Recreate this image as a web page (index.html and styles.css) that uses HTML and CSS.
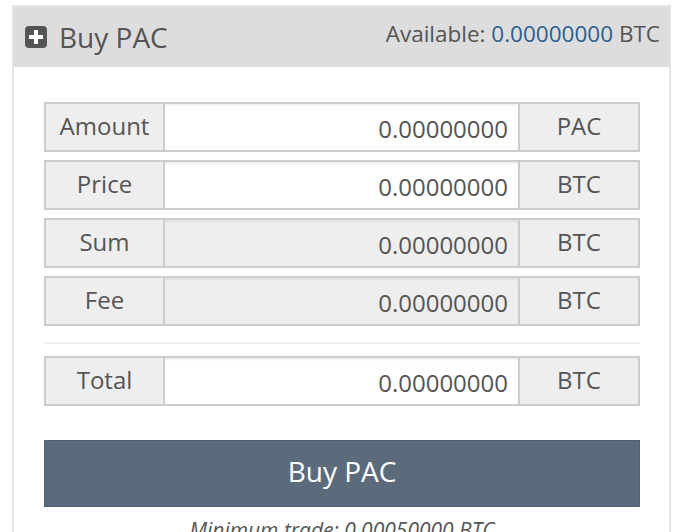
FILE: index.html
```html
<!DOCTYPE html>
<html lang="en">
<head>
    <meta charset="UTF-8">
    <title>Buy PAC</title>
    <link rel="stylesheet" href="styles.css">
</head>
<body>

<!-- buy panel -->
<div class="panel">
    <div class="panel-heading">
        <div class="title">
            <svg class="plus-icon" width="22" height="22" viewBox="0 0 22 22">
                <rect x="0" y="0" width="22" height="22" rx="4" fill="#555"/>
                <rect x="9" y="4" width="4" height="14" fill="#fff"/>
                <rect x="4" y="9" width="14" height="4" fill="#fff"/>
            </svg>
            Buy PAC
        </div>
        <div class="available">Available: <span class="balance">0.00000000</span> BTC</div>
    </div>

    <div class="panel-body">
        <div class="input-row">
            <div class="label">Amount</div>
            <div class="value">0.00000000</div>
            <div class="addon">PAC</div>
        </div>
        <div class="input-row">
            <div class="label">Price</div>
            <div class="value">0.00000000</div>
            <div class="addon">BTC</div>
        </div>
        <div class="input-row">
            <div class="label">Sum</div>
            <div class="value readonly">0.00000000</div>
            <div class="addon">BTC</div>
        </div>
        <div class="input-row">
            <div class="label">Fee</div>
            <div class="value readonly">0.00000000</div>
            <div class="addon">BTC</div>
        </div>

        <div class="divider"></div>

        <div class="input-row">
            <div class="label">Total</div>
            <div class="value">0.00000000</div>
            <div class="addon">BTC</div>
        </div>

        <button class="buy-btn">Buy PAC</button>
        <div class="min-trade">Minimum trade: 0.00050000 BTC</div>
    </div>
</div>

</body>
</html>
```

FILE: styles.css
```css
body {
    font-family: "Open Sans", "Liberation Sans", sans-serif;
    background-color: #ffffff;
    color: #555555;
    margin: 0;
    padding: 5px 0 0 12px;
}
.panel {
    width: 659px;
    height: 540px;
    border: 2px solid #e4e4e4;
    border-bottom: none;
    box-sizing: border-box;
}
.panel-heading {
    background-color: #dddddd;
    height: 60px;
    padding: 0 9px 0 11px;
    display: flex;
    justify-content: space-between;
    align-items: center;
}
.title {
    display: flex;
    align-items: center;
    font-size: 28px;
    color: #555555;
}
.plus-icon {
    margin-right: 12px;
}
.available {
    font-size: 22.5px;
    color: #555555;
    padding-bottom: 8px;
}
.balance {
    color: #2b5f91;
}
.panel-body {
    padding: 35px 29px 0 30px;
}
.input-row {
    display: flex;
    height: 50px;
    margin-bottom: 8px;
    font-size: 24px;
}
.label,
.addon {
    width: 121px;
    flex-shrink: 0;
    background-color: #eeeeee;
    border: 2px solid #cccccc;
    box-sizing: border-box;
    display: flex;
    align-items: center;
    justify-content: center;
    padding-bottom: 4px;
}
.addon {
    width: 122px;
}
.value {
    flex: 1;
    background-color: #ffffff;
    border-top: 2px solid #cccccc;
    border-bottom: 2px solid #cccccc;
    box-shadow: inset 0 2px 2px rgba(0, 0, 0, 0.06);
    display: flex;
    align-items: center;
    justify-content: flex-end;
    padding: 2px 10px 0 0;
}
.value.readonly {
    background-color: #eeeeee;
}
.divider {
    height: 2px;
    background-color: #eeeeee;
    margin: 16px 0 12px;
}
.buy-btn {
    display: block;
    width: 100%;
    height: 67px;
    margin-top: 34px;
    background-color: #5b6b7c;
    border: 1px solid #506070;
    color: #ffffff;
    font-family: "Open Sans", "Liberation Sans", sans-serif;
    font-size: 28px;
    padding: 0 0 6px;
}
.min-trade {
    margin-top: 9px;
    text-align: center;
    font-style: italic;
    font-size: 21px;
}
```
